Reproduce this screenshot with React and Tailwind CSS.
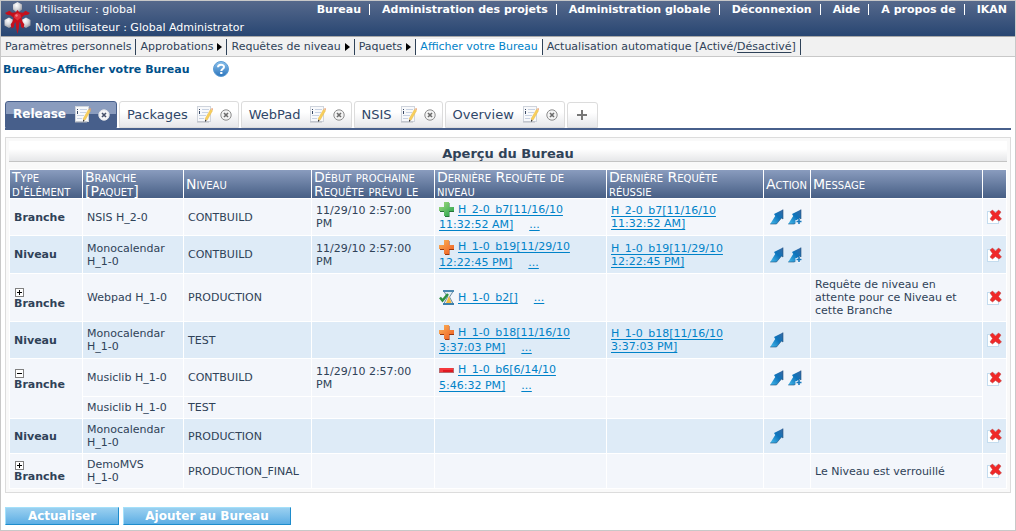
import React from "react";

function Logo() {
  return (
    <svg width="28" height="33" viewBox="0 0 28 33" className="shrink-0" aria-hidden="true">
      <defs>
        <radialGradient id="ball" cx="40%" cy="30%" r="75%">
          <stop offset="0" stopColor="#ffffff" />
          <stop offset="0.5" stopColor="#d5d6da" />
          <stop offset="1" stopColor="#8f8f96" />
        </radialGradient>
      </defs>
      <path d="M13.500 1l4.500 2.500v5L13.500 12 9 8.500v-5z" fill="url(#ball)" />
      <path d="M5 16.500l4.500 2.500v5.500L5 27 .5 24.500V19z" fill="url(#ball)" />
      <path d="M22 16.500l4.500 2.500v5.500L22 27l-4.500-2.500V19z" fill="url(#ball)" />
      <path d="M13.500 9l1.800 2.200L19 11.800l2.500-2 4.500 2.200-2 1.800-3.500.4-3 2.600 1.200 4.200 1.600 2.200-.8 4.200-2.500-1.500-.3-3.200L15.400 21l-.6 6.500-1.300 5.500-1.300-5.500-.6-6.500-1.300 1.700-.3 3.200-2.500 1.500-.8-4.200 1.600-2.200 1.200-4.200-3-2.600-3.500-.4L1 12l4.500-2.200 2.500 2 3.700-.6z" fill="#c4101c" />
      <path d="M10.500 13.500l3-1.500 3 1.500 .5 3-3.500 3-3.500-3z" fill="#e0303a" />
      <circle cx="12.500" cy="14.500" r="1.200" fill="#f08088" />
    </svg>
  );
}

function HelpIcon() {
  return (
    <svg width="16" height="16" viewBox="0 0 16 16" aria-hidden="true">
      <defs>
        <linearGradient id="help" x1="0" y1="0" x2="0" y2="1">
          <stop offset="0" stopColor="#8cc2ec" />
          <stop offset="1" stopColor="#2c74bc" />
        </linearGradient>
      </defs>
      <circle cx="8" cy="8" r="7.500" fill="url(#help)" stroke="#5c9cd4" strokeWidth="1" />
      <path d="M5 6.200C5 2.900 11 2.900 11 6c0 2-2.700 2-2.700 4" fill="none" stroke="#fff" strokeWidth="2" />
      <rect x="7.200" y="11" width="2.200" height="2" fill="#fff" />
    </svg>
  );
}

function EditIcon() {
  return (
    <svg width="16" height="17" viewBox="0 0 16 17" aria-hidden="true">
      <rect x="0.500" y="0.500" width="13" height="15" fill="#f8f9fb" stroke="#cfd4dc" />
      <path d="M0 16h12" stroke="#b5b9c0" />
      <path d="M2 3h1v1H2zM2 5h1v3H2z" fill="#3a4a66" />
      <path d="M5 3.500h7M5 6.500h6M2 9.500h7M2 12.500h5" stroke="#c8d2e2" />
      <path d="M13.500 3.500l2 1.200-5.500 9.500-2-1.200z" fill="#f8d05c" stroke="#e8b848" strokeWidth="0.500" />
      <path d="M14 3l1-1 1 .8-.5 1.800z" fill="#e8a070" />
      <path d="M8 13.500l1.600 1L8 16z" fill="#3c3c3c" />
    </svg>
  );
}

function CloseIcon({ light }) {
  return (
    <svg width="12" height="12" viewBox="0 0 12 12" aria-hidden="true">
      <circle cx="6" cy="6" r="5.200" fill={light ? "#f4f5f8" : "#f3f3f3"} stroke={light ? "#e4e6ea" : "#8c8c8c"} />
      <path d="M4 4l4 4M8 4l-4 4" stroke={light ? "#46506a" : "#6c6c6c"} strokeWidth="1.600" />
    </svg>
  );
}

function Cross({ from, to, edge, id }) {
  return (
    <>
      <defs>
        <linearGradient id={id} x1="0" y1="0" x2="1" y2="1">
          <stop offset="0" stopColor={from} />
          <stop offset="1" stopColor={to} />
        </linearGradient>
      </defs>
      <path d="M6 1h4.500v4.500H15V10h-4.500v5H6v-5H1V5.500h5z" fill={edge} />
      <path d="M5 0h5v5h5v4h-5v5H5V9H0V5h5z" fill={`url(#${id})`} />
    </>
  );
}

function StatusIcon({ kind }) {
  return (
    <svg width="15" height="15" viewBox="0 0 15 15" className="mr-1 inline-block align-middle" aria-hidden="true">
      {kind === "ok" && <Cross id="ok" from="#a6dc82" to="#22a04a" edge="#28743a" />}
      {kind === "warn" && <Cross id="warn" from="#fbb458" to="#ee5a20" edge="#983810" />}
      {kind === "fail" && (
        <>
          <rect y="5" width="15" height="5" fill="#b8686c" />
          <rect x="1" y="5" width="13" height="4" fill="#f4383c" />
          <rect x="4" y="7" width="10" height="2" fill="#e01820" />
        </>
      )}
      {kind === "wait" && (
        <>
          <path d="M5 1.500h9L10.500 7l3.500 6.500H5L8.500 7z" fill="#e4eef4" stroke="#6c8ca4" />
          <path d="M7 13l3-7 2.500 7z" fill="#f4b83c" />
          <rect x="4" y="0" width="11" height="2" fill="#4c88b0" />
          <rect x="4" y="13" width="11" height="2" fill="#3c80ac" />
          <path d="M1 7.500l2.500 3L9 4" fill="none" stroke="#2f9040" strokeWidth="2.500" />
        </>
      )}
    </svg>
  );
}

function ArrowIcon({ plus }) {
  return (
    <svg width="14" height="16" viewBox="0 0 14 16" aria-hidden="true">
      <defs>
        <linearGradient id="arrow" x1="1" y1="0" x2="0" y2="1">
          <stop offset="0" stopColor="#3c68a0" />
          <stop offset="0.450" stopColor="#0c74bc" />
          <stop offset="1" stopColor="#48bcec" />
        </linearGradient>
      </defs>
      <path d="M13 .5v9.500l-1.500-1L6.500 15H.2l5-8L4 5z" fill="url(#arrow)" />
      <path d="M.2 15H6.500l5-6 1.500 1V.5" fill="none" stroke="#24507c" strokeWidth="0.600" />
      {plus && (
        <>
          <path d="M7.500 12.500H14M11 10v6" stroke="#eef4fb" strokeWidth="3" />
          <path d="M8.500 12.500h5M11 10v5" stroke="#1878bc" strokeWidth="1.600" />
        </>
      )}
    </svg>
  );
}

function DeleteIcon() {
  return (
    <svg width="16" height="16" viewBox="0 0 16 16" aria-hidden="true">
      <rect x="0.500" y="2.500" width="11" height="12" fill="#fff" stroke="#c4dcee" />
      <path d="M3 3L5.500 1 8.500 4 11.500 1 14 3 11.500 6.500l3 3.500-2.500 2L8.500 9.500l-3 2.500L3 10 5.500 6.500z" fill="#f02828" stroke="#b84848" strokeWidth="0.500" />
    </svg>
  );
}

function ToggleIcon({ open }) {
  return (
    <svg width="9" height="9" viewBox="0 0 9 9" className="block" aria-hidden="true">
      <rect x="0.500" y="0.500" width="8" height="8" fill="#fff" stroke="#808080" />
      <path d={open ? "M2 4.500h5" : "M2 4.500h5M4.500 2v5"} stroke="#000" />
    </svg>
  );
}

const mainNav = ["Bureau", "Administration des projets", "Administration globale", "Déconnexion", "Aide", "A propos de", "IKAN"];
const subNav = [
  { label: "Paramètres personnels" },
  { label: "Approbations", menu: true },
  { label: "Requêtes de niveau", menu: true },
  { label: "Paquets", menu: true },
  { label: "Afficher votre Bureau", active: true },
];
const tabs = ["Release", "Packages", "WebPad", "NSIS", "Overview"];

const rows = [
  { type: "Branche", h: "h-[36px]", project: "NSIS", version: "H_2-0", level: "CONTBUILD", next: "11/29/10 2:57:00 PM", status: "ok", last: ["H_2-0_b7[11/16/10", "11:32:52 AM]"], success: ["H_2-0_b7[11/16/10", "11:32:52 AM]"], actions: 2 },
  { type: "Niveau", h: "h-[37px]", project: "Monocalendar", version: "H_1-0", level: "CONTBUILD", next: "11/29/10 2:57:00 PM", status: "warn", last: ["H_1-0_b19[11/29/10", "12:22:45 PM]"], success: ["H_1-0_b19[11/29/10", "12:22:45 PM]"], actions: 2 },
  { type: "Branche", toggle: "closed", h: "h-[47px]", project: "Webpad", version: "H_1-0", level: "PRODUCTION", status: "wait", last: ["H_1-0_b2[]"], actions: 0, message: "Requête de niveau en attente pour ce Niveau et cette Branche" },
  { type: "Niveau", h: "h-[36px]", project: "Monocalendar", version: "H_1-0", level: "TEST", status: "warn", last: ["H_1-0_b18[11/16/10", "3:37:03 PM]"], success: ["H_1-0_b18[11/16/10", "3:37:03 PM]"], actions: 1 },
  { type: "Branche", toggle: "open", span: 2, h: "h-[37px]", project: "Musiclib", version: "H_1-0", level: "CONTBUILD", next: "11/29/10 2:57:00 PM", status: "fail", last: ["H_1-0_b6[6/14/10", "5:46:32 PM]"], actions: 2 },
  { nested: true, h: "h-[21px]", project: "Musiclib", version: "H_1-0", level: "TEST", actions: 0 },
  { type: "Niveau", h: "h-[34px]", project: "Monocalendar", version: "H_1-0", level: "PRODUCTION", actions: 1 },
  { type: "Branche", toggle: "closed", h: "h-[34px]", project: "DemoMVS", version: "H_1-0", level: "PRODUCTION_FINAL", actions: 0, message: "Le Niveau est verrouillé" },
];

const headers = [["Type", "d'élément"], ["Branche", "[Paquet]"], ["Niveau"], ["Début prochaine", "Requête prévu le"], ["Dernière Requête de", "niveau"], ["Dernière Requête", "réussie"], ["Action"], ["Message"], []];

const linkClass = "text-[#0082c8] underline underline-offset-2 [text-decoration-skip-ink:none] [text-decoration-thickness:1px]";

function Lines({ parts }) {
  return parts.map((p, i) => (
    <React.Fragment key={i}>
      {i > 0 && <br />}
      {p}
    </React.Fragment>
  ));
}

function Row({ row }) {
  const bg = row.type === "Niveau" ? "bg-[#deebf7]" : "bg-[#f3f6fb]";
  const edge = row.span ? "align-top" : "align-middle";
  return (
    <tr className={`${row.h} ${bg}`}>
      {!row.nested && (
        <th scope="row" rowSpan={row.span} className={`px-1 text-left font-bold ${edge}`}>
          {row.toggle ? (
            <button type="button" aria-label={row.toggle === "open" ? "Réduire" : "Développer"} className={`ml-px block ${row.span ? "mt-2.5" : "mt-0.5"}`}>
              <ToggleIcon open={row.toggle === "open"} />
            </button>
          ) : null}
          {row.type}
        </th>
      )}
      <td className="pr-2 pl-1">{row.project} <span className="whitespace-nowrap">{row.version}</span></td>
      <td className="px-1">{row.level}</td>
      <td className="px-1">{row.next}</td>
      <td className="px-1 leading-[15px]">
        {row.last && (
          <>
            <StatusIcon kind={row.status} />
            <a href="#requete" className={linkClass}><Lines parts={row.last} /></a>
            <a href="#details" className={`ml-4 ${linkClass}`}>...</a>
          </>
        )}
      </td>
      <td className="px-1">
        {row.success && <a href="#reussie" className={linkClass}><Lines parts={row.success} /></a>}
      </td>
      <td className="px-1.5">
        <div className="flex gap-1">
          {row.actions > 0 && <button type="button" aria-label="Demander"><ArrowIcon /></button>}
          {row.actions > 1 && <button type="button" aria-label="Demander et ajouter"><ArrowIcon plus /></button>}
        </div>
      </td>
      <td className="px-1">{row.message}</td>
      {!row.nested && (
        <td rowSpan={row.span} className={`px-1 ${edge}`}>
          <button type="button" aria-label="Supprimer" className={`block ${row.span ? "mt-3" : ""}`}>
            <DeleteIcon />
          </button>
        </td>
      )}
    </tr>
  );
}

export default function App() {
  return (
    <div className="border border-[#c8c8c8] bg-white font-['DejaVu_Sans',Verdana,sans-serif] text-[11px] leading-[13px] text-[#2f4258]">
      <header className="flex h-9 justify-between border-b border-[#a8a8a8] bg-linear-to-b from-[#56698c] to-[#284672] text-white">
        <div className="flex gap-[3px] pl-[3px]">
          <Logo />
          <div className="leading-[18px]">
            <div>Utilisateur : global</div>
            <div>Nom utilisateur : Global Administrator</div>
          </div>
        </div>
        <nav className="flex h-4 items-center pr-2 font-bold">
          {mainNav.map((item, i) => (
            <React.Fragment key={item}>
              {i > 0 && <span className="mr-3 ml-2 h-[11px] w-px bg-white" />}
              <a href="#nav" className="whitespace-nowrap">{item}</a>
            </React.Fragment>
          ))}
        </nav>
      </header>

      <nav className="flex h-5 items-center border-b border-[#c8c8c8] bg-[#f1f1f1]">
        {subNav.map((item) => (
          <a
            key={item.label}
            href="#menu"
            className={`flex h-4 items-center gap-1 border-r border-[#2f4258] px-1 whitespace-nowrap ${item.active ? "bg-white text-[#0082c8]" : ""}`}
          >
            {item.label}
            {item.menu && (
              <svg width="5" height="8" viewBox="0 0 5 8" aria-hidden="true"><path d="M0 0l5 4-5 4z" fill="#000" /></svg>
            )}
          </a>
        ))}
        <span className="flex h-4 items-center border-r border-[#2f4258] px-1 whitespace-nowrap">
          Actualisation automatique [Activé/<a href="#desactive" className="underline underline-offset-2">Désactivé</a>]
        </span>
      </nav>

      <div className="flex h-6 items-center gap-6 pl-0.5">
        <div className="font-bold text-[#00508a]">
          <a href="#bureau">Bureau</a><span className="font-normal">&gt;</span><a href="#afficher">Afficher votre Bureau</a>
        </div>
        <a href="#aide" aria-label="Aide"><HelpIcon /></a>
      </div>

      <main className="px-1 pt-5 pb-[5px]">
        <div className="flex items-end gap-0.5 border-b-2 border-[#475f8b] text-[13px] text-[#2f4668]">
          {tabs.map((tab, i) => (
            <div
              key={tab}
              className={`flex h-[27px] items-center gap-[7px] rounded-t-[3px] border pr-[6px] pl-[7px] ${
                i === 0
                  ? "border-[#475f8b] bg-linear-to-b from-[#8a9cbe] from-50% to-[#475f8b] to-50% text-[12px] font-bold text-white"
                  : "border-[#dcdcdc] bg-linear-to-b from-white from-40% to-[#e6e7ea]"
              }`}
            >
              <button type="button" className="mr-0.5">{tab}</button>
              <button type="button" aria-label={`Modifier ${tab}`}><EditIcon /></button>
              <button type="button" aria-label={`Fermer ${tab}`}><CloseIcon light={i === 0} /></button>
            </div>
          ))}
          <button type="button" aria-label="Ajouter un onglet" className="flex h-[26px] w-[31px] items-center justify-center rounded-t-[3px] border border-[#dcdcdc] bg-linear-to-b from-white from-40% to-[#e6e7ea]">
            <svg width="10" height="10" viewBox="0 0 10 10" aria-hidden="true"><path d="M0 5h10M5 0v10" stroke="#777" strokeWidth="2" /></svg>
          </button>
        </div>

        <section className="mt-[7px] border border-[#dcdcdc] bg-[#f9f9f9] p-[3px]">
          <h1 className="h-[21px] border-b border-[#c4c4c4] bg-linear-to-b from-white from-40% to-[#e6e7e9] pt-1 text-center text-[13px] leading-[18px] font-bold">
            Aperçu du Bureau
          </h1>
          <table className="mt-[7px] w-full table-fixed border-separate border-spacing-px bg-white">
            <colgroup>
              <col className="w-[72px]" />
              <col className="w-[100px]" />
              <col className="w-[127px]" />
              <col className="w-[122px]" />
              <col className="w-[171px]" />
              <col className="w-[156px]" />
              <col className="w-[46px]" />
              <col />
              <col className="w-[23px]" />
            </colgroup>
            <thead>
              <tr className="h-7">
                {headers.map((parts, i) => (
                  <th key={i} scope="col" className="bg-linear-to-b from-[#8a9cbe] to-[#475f85] px-0.5 text-left text-[14px] leading-[14px] font-normal whitespace-nowrap text-white [font-variant:small-caps]">
                    <Lines parts={parts} />
                  </th>
                ))}
              </tr>
            </thead>
            <tbody>
              {rows.map((row, i) => <Row key={i} row={row} />)}
            </tbody>
          </table>
        </section>

        <div className="mt-[14px] flex gap-1 text-[12px] font-bold text-white">
          <button type="button" className="h-[18px] w-[114px] border border-t-[#a4e0fa] border-r-[#1e8ccc] border-b-[#1e8ccc] border-l-[#a4e0fa] bg-linear-to-b from-[#9ad0f0] to-[#5caee4]">Actualiser</button>
          <button type="button" className="h-[18px] w-[168px] border border-t-[#a4e0fa] border-r-[#1e8ccc] border-b-[#1e8ccc] border-l-[#a4e0fa] bg-linear-to-b from-[#9ad0f0] to-[#5caee4]">Ajouter au Bureau</button>
        </div>
      </main>
    </div>
  );
}
